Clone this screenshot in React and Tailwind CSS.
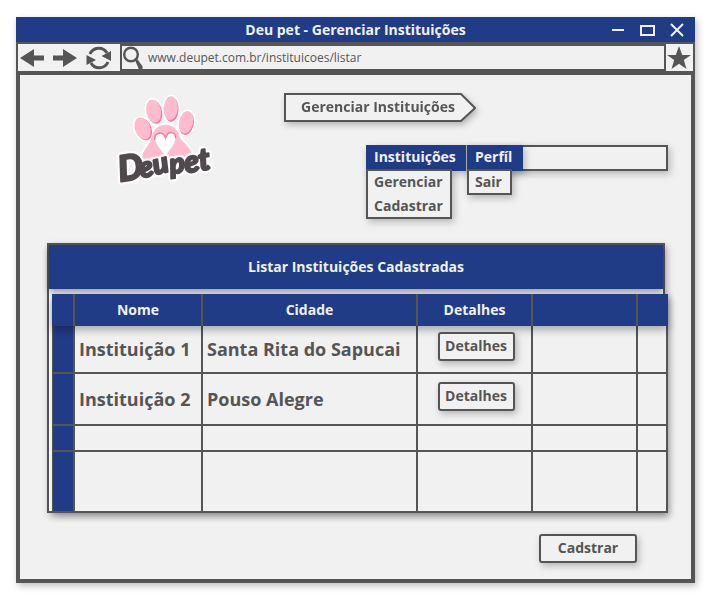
import React from 'react';

const institutions = [
  { name: 'Instituição 1', city: 'Santa Rita do Sapucai', height: 'h-12' },
  { name: 'Instituição 2', city: 'Pouso Alegre', height: 'h-[52px]' },
];

const shadow = 'shadow-[2px_3px_7px_rgba(0,0,0,0.25)]';
const cell = 'border-r-2 border-b-2 border-[#555] p-0';
const marker = 'border-r-2 border-b-2 border-l border-[#555] bg-[#203c86] p-0';
const headCell = 'border-r-2 border-[#555] p-0 font-bold';

function TitleBar() {
  return (
    <header className="relative flex h-[25px] items-center justify-center bg-[#203c86] text-[#f1f1f1]">
      <h1 className="text-sm font-bold">Deu pet - Gerenciar Instituições</h1>
      <div className="absolute inset-y-0 right-[10px] flex items-center gap-[14px]">
        <button type="button" aria-label="Minimizar">
          <svg className="block" width="14" height="16" viewBox="0 0 14 16">
            <path d="M1 8h12" stroke="currentColor" strokeWidth="2" />
          </svg>
        </button>
        <button type="button" aria-label="Maximizar">
          <svg className="block" width="16" height="16" viewBox="0 0 16 16">
            <path d="M2 4h13v9H2z" fill="none" stroke="currentColor" strokeWidth="2" />
          </svg>
        </button>
        <button type="button" aria-label="Fechar">
          <svg className="block" width="16" height="16" viewBox="0 0 16 16">
            <path d="M2 2l12 12M14 2L2 14" stroke="currentColor" strokeWidth="2" />
          </svg>
        </button>
      </div>
    </header>
  );
}

function Toolbar() {
  return (
    <div className="flex h-[33px] bg-[#555] px-[2px] pt-[2px] pb-1">
      <div className="flex w-[102px] items-center gap-[9px] bg-[#f1f1f1] pl-[2px]">
        <button type="button" aria-label="Voltar">
          <svg className="block" width="24" height="18" viewBox="0 0 24 18">
            <path d="M0 9L14 0v6.500h10v5H14V18z" fill="#555" />
          </svg>
        </button>
        <button type="button" aria-label="Avançar">
          <svg className="block" width="24" height="18" viewBox="0 0 24 18">
            <path d="M24 9L10 0v6.500H0v5h10V18z" fill="#555" />
          </svg>
        </button>
        <button type="button" aria-label="Atualizar">
          <svg className="block" width="26" height="24" viewBox="0 0 26 24">
            <path d="M4 8C7 1 17 0 21 7" fill="none" stroke="#555" strokeWidth="3" />
            <path d="M25 5v10L15.500 10z" fill="#555" />
            <path d="M22 16C19 23 9 24 5 17" fill="none" stroke="#555" strokeWidth="3" />
            <path d="M.5 9v10L10 14z" fill="#555" />
          </svg>
        </button>
      </div>
      <form className="flex flex-1 items-center border-2 border-r border-[#555] bg-[#f1f1f1]">
        <label htmlFor="address" aria-label="Endereço" className="pl-[1px]">
          <svg className="block" width="20" height="24" viewBox="0 0 20 24">
            <circle cx="8" cy="8.500" r="6.800" fill="none" stroke="#555" strokeWidth="2.400" />
            <path d="M11.500 13l2-1 1.500 2 4.500 6.500v3h-3.500z" fill="#555" />
          </svg>
        </label>
        <input
          id="address"
          type="text"
          defaultValue="www.deupet.com.br/instituicoes/listar"
          className="min-w-0 flex-1 bg-transparent pl-[5px] text-xs text-[#555] outline-none"
        />
      </form>
      <button type="button" aria-label="Favoritos" className="flex w-7 items-center justify-center border-l border-[#555] bg-[#f1f1f1] pr-[2px]">
        <svg className="block" width="24" height="24" viewBox="0 0 24 24">
          <path d="M12 0l3.200 8.900H24l-7.200 5.200 2.700 9L12 17.800 4.500 23.100l2.700-9L0 8.900h8.800z" fill="#555" />
        </svg>
      </button>
    </div>
  );
}

function Logo() {
  const toes = [
    [129, 143, 23, 34, -20],
    [162, 91, 22, 35, -10],
    [213, 83, 21, 36, 3],
    [259, 125, 21, 34, 13],
  ];
  const pad =
    'M128 238C120 212 150 196 156 166C162 140 180 131 196 131C220 131 234 146 238 165C244 182 268 194 274 215C279 240 262 254 242 246C210 238 160 272 128 238z';
  return (
    <svg className="block h-24 w-24 shrink-0 overflow-visible" viewBox="51 36 288 288" role="img" aria-label="Deu Pet">
      <g fill="#fff" stroke="#fff" strokeWidth="12" strokeLinejoin="round">
        {toes.map(([x, y, rx, ry, a]) => (
          <ellipse key={x} cx={x} cy={y} rx={rx} ry={ry} transform={`rotate(${a} ${x} ${y})`} />
        ))}
        <path d={pad} />
      </g>
      {toes.map(([x, y, rx, ry, a]) => (
        <g key={x} transform={`rotate(${a} ${x} ${y})`}>
          <ellipse cx={x + 2} cy={y + 3} rx={rx} ry={ry} fill="#f9799f" />
          <ellipse cx={x - 1} cy={y - 1} rx={rx} ry={ry} fill="#ffbccf" />
        </g>
      ))}
      <path d={pad} fill="#ffbccf" />
      <path d="M210 250Q262 262 275 222" fill="none" stroke="#f9799f" strokeWidth="5" />
      <path
        d="M197 224C184 208 164 188 166 171C168 154 190 153 197 172C204 151 227 151 226 172C225 190 208 208 197 224z"
        fill="#fff"
      />
      <path d="M164 177C163 152 190 150 197 171C203 149 228 149 227 172" fill="none" stroke="#f9799f" strokeWidth="4" />
      <g
        fill="#504a4e"
        stroke="#504a4e"
        strokeWidth="6"
        strokeLinejoin="round"
        className="font-['Lato','Open_Sans',sans-serif] font-black italic [filter:drop-shadow(5px_0_0_#fff)_drop-shadow(-5px_0_0_#fff)_drop-shadow(0_5px_0_#fff)_drop-shadow(0_-5px_0_#fff)]"
      >
        <text x="60" y="302" fontSize="106" transform="rotate(-9 60 302)">D</text>
        <text x="124" y="292" fontSize="86" transform="rotate(-14 124 292)">eu</text>
        <text x="212" y="279" fontSize="84" transform="rotate(-8 212 279)">p</text>
        <text x="257" y="277" fontSize="92" transform="rotate(-10 257 277)">et</text>
      </g>
    </svg>
  );
}

function Menu() {
  const top = 'flex h-full items-center bg-[#203c86] px-2 pb-[2px] text-[#f1f1f1]';
  const list = `absolute top-6 left-0 border-2 border-[#555] bg-[#f1f1f1] px-[6px] ${shadow}`;
  return (
    <nav className={`ml-[82px] flex h-[26px] bg-[#f1f1f1] text-sm font-bold ${shadow}`}>
      <div className="relative z-10 w-[101px] border-r border-[#aaa]">
        <button type="button" className={`w-full ${top}`}>Instituições</button>
        <ul className={`w-[86px] ${list}`}>
          <li className="h-6 leading-[22px]"><a href="#gerenciar">Gerenciar</a></li>
          <li className="h-[22px] leading-[22px]"><a href="#cadastrar">Cadastrar</a></li>
        </ul>
      </div>
      <div className={`relative w-14 ${shadow}`}>
        <button type="button" className={`w-full ${top}`}>Perfíl</button>
        <ul className={`w-[45px] ${list}`}>
          <li className="h-[22px] leading-[22px]"><a href="#sair">Sair</a></li>
        </ul>
      </div>
      <div className="flex-1 border-2 border-l-0 border-[#555]" />
    </nav>
  );
}

function InstitutionsPanel() {
  return (
    <section className={`mt-[54px] mr-[3px] border-2 border-[#555] bg-white ${shadow}`}>
      <h3 className="relative flex h-11 items-center justify-center bg-[#203c86] text-sm font-bold text-[#f1f1f1] shadow-[0_3px_6px_rgba(0,0,0,0.4)]">
        Listar Instituições Cadastradas
      </h3>
      <div className={`relative mt-[5px] -mr-[5px] -mb-[2px] ml-[3px] ${shadow}`}>
        <table className="w-full table-fixed border-separate border-spacing-0 bg-[#f1f1f1]">
          <colgroup>
            <col className="w-[23px]" />
            <col className="w-32" />
            <col />
            <col className="w-[115px]" />
            <col className="w-[105px]" />
            <col className="w-[30px]" />
          </colgroup>
          <thead className="relative bg-[#203c86] text-sm text-[#f1f1f1] shadow-[0_4px_8px_rgba(0,0,0,0.3)]">
            <tr className="h-8">
              <td className={headCell} />
              <th scope="col" className={headCell}>Nome</th>
              <th scope="col" className={headCell}>Cidade</th>
              <th scope="col" className={headCell}>Detalhes</th>
              <td className={headCell} />
              <td className="p-0" />
            </tr>
          </thead>
          <tbody className="text-lg font-bold">
            {institutions.map((item) => (
              <tr key={item.name} className={item.height}>
                <td className={marker} />
                <td className={`${cell} pl-1 whitespace-nowrap`}>{item.name}</td>
                <td className={`${cell} pl-1`}>{item.city}</td>
                <td className="border-r-2 border-b-2 border-[#555] pt-0 pr-0 pb-[6px] pl-[3px]">
                  <button
                    type="button"
                    className={`relative mx-auto flex h-[29px] w-[77px] items-center justify-center rounded-[3px] border-2 border-[#555] bg-[#f1f1f1] pb-[1px] text-sm font-bold ${shadow}`}
                  >
                    Detalhes
                  </button>
                </td>
                <td className={cell} />
                <td className={cell} />
              </tr>
            ))}
            {['h-[26px]', 'h-[61px]'].map((height) => (
              <tr key={height} className={height}>
                <td className={marker} />
                <td className={cell} />
                <td className={cell} />
                <td className={cell} />
                <td className={cell} />
                <td className={cell} />
              </tr>
            ))}
          </tbody>
        </table>
      </div>
    </section>
  );
}

export default function App() {
  return (
    <div className="bg-white pt-[17px] pr-5 pb-[19px] pl-4 font-['Open_Sans','Noto_Sans',sans-serif] text-[#555]">
      <div className={shadow}>
        <TitleBar />
        <Toolbar />
        <main className="border-4 border-t-0 border-[#555] bg-[#f1f1f1] pt-[18px] pr-[23px] pb-4 pl-[27px]">
          <div className="flex gap-[71px] pl-[70px]">
            <Logo />
            <div className="flex-1">
              <div className="relative flex h-[30px] w-48 items-center drop-shadow-[2px_3px_3px_rgba(0,0,0,0.25)]">
                <svg className="absolute inset-0" width="192" height="30" viewBox="0 0 192 30">
                  <path d="M1 1h176l14 14-14 13H1z" fill="#f1f1f1" stroke="#555" strokeWidth="2" />
                </svg>
                <h2 className="relative pb-[2px] pl-[17px] text-sm font-bold whitespace-nowrap">Gerenciar Instituições</h2>
              </div>
              <div className="pt-[22px]">
                <Menu />
              </div>
            </div>
          </div>
          <InstitutionsPanel />
          <div className="flex justify-end pt-[21px] pr-[31px]">
            <button
              type="button"
              className={`flex h-[29px] w-[98px] items-center justify-center rounded-[3px] border-2 border-[#555] bg-[#f1f1f1] pb-[1px] text-sm font-bold ${shadow}`}
            >
              Cadstrar
            </button>
          </div>
        </main>
      </div>
    </div>
  );
}
